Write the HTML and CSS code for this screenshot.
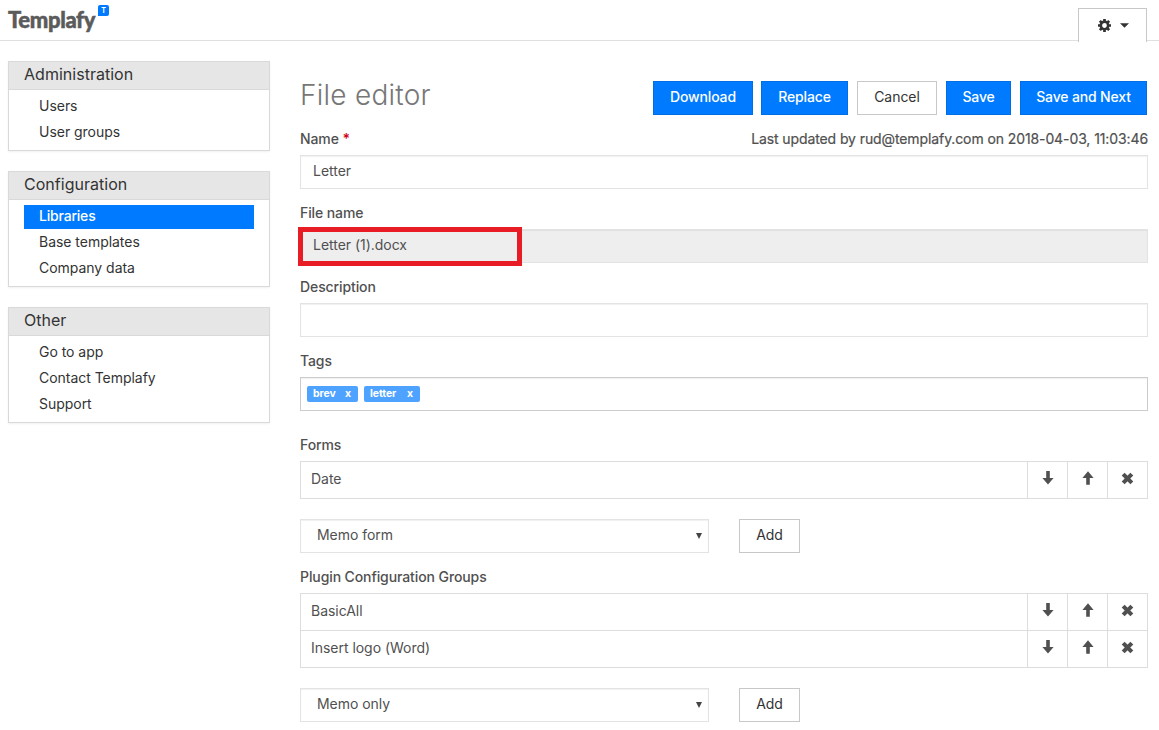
FILE: index.html
```html
<!DOCTYPE html>
<html lang="en">
<head>
<meta charset="utf-8">
<title>Templafy – File editor</title>
<link rel="stylesheet" href="styles.css">
</head>
<body>
<svg class="sprite" aria-hidden="true">
  <symbol id="down" viewBox="0 0 12 14"><path d="M4.2 0h3.6v7H11.6L6 13.5 .4 7h3.8z"/></symbol>
  <symbol id="up" viewBox="0 0 12 14"><path d="M4.2 13.8h3.6V7H11.6L6 .3 .4 7h3.8z"/></symbol>
  <symbol id="cross" viewBox="0 0 12 12"><path d="M2 2l8 8M10 2l-8 8" fill="none" stroke="currentColor" stroke-width="3.8"/></symbol>
</svg>
<header class="topbar">
  <div class="logo"><span class="logo-word">Templafy</span><span class="logo-badge">T</span></div>
  <div class="settings">
    <svg class="gear" viewBox="0 0 12 12"><circle cx="6" cy="6" r="3.4" fill="none" stroke="currentColor" stroke-width="2.4"/><path d="M6 0v2M6 10v2M0 6h2M10 6h2M1.7 1.7l1.5 1.5M8.8 8.8l1.5 1.5M1.7 10.3l1.5-1.5M8.8 3.2l1.5-1.5" stroke="currentColor" stroke-width="2.5"/></svg>
    <svg class="caret" viewBox="0 0 8 4"><path d="M0 0h8L4 4z"/></svg>
  </div>
</header>
<div class="layout">
  <nav class="sidebar">
    <section class="panel">
      <h2 class="panel-head">Administration</h2>
      <ul class="menu"><li>Users</li><li>User groups</li></ul>
    </section>
    <section class="panel">
      <h2 class="panel-head">Configuration</h2>
      <ul class="menu"><li class="active">Libraries</li><li>Base templates</li><li>Company data</li></ul>
    </section>
    <section class="panel">
      <h2 class="panel-head">Other</h2>
      <ul class="menu"><li>Go to app</li><li>Contact Templafy</li><li>Support</li></ul>
    </section>
  </nav>
  <main class="main">
    <div class="title-row">
      <h1 class="title">File editor</h1>
      <div class="actions">
        <div class="btn primary download">Download</div>
        <div class="btn primary replace">Replace</div>
        <div class="btn cancel">Cancel</div>
        <div class="btn primary save">Save</div>
        <div class="btn primary next">Save and Next</div>
      </div>
    </div>
    <div class="field">
      <div class="label"><span>Name <b class="req">*</b></span><span class="updated">Last updated by rud@templafy.com on 2018-04-03, 11:03:46</span></div>
      <div class="input">Letter</div>
    </div>
    <div class="field">
      <div class="label">File name</div>
      <div class="input disabled">Letter (1).docx<div class="highlight"></div></div>
    </div>
    <div class="field">
      <div class="label">Description</div>
      <div class="input"></div>
    </div>
    <div class="field tags-field">
      <div class="label">Tags</div>
      <div class="input tags"><span class="tag brev">brev<i>x</i></span><span class="tag letter">letter<i>x</i></span></div>
    </div>
    <div class="field">
      <div class="label">Forms</div>
      <div class="grid">
        <div class="row"><div class="cell">Date</div><div class="ic"><svg><use href="#down"/></svg></div><div class="ic"><svg><use href="#up"/></svg></div><div class="ic"><svg class="x"><use href="#cross"/></svg></div></div>
      </div>
      <div class="add-row"><div class="input select">Memo form<span class="arrow"></span></div><div class="btn add">Add</div></div>
    </div>
    <div class="field">
      <div class="label">Plugin Configuration Groups</div>
      <div class="grid">
        <div class="row"><div class="cell">BasicAll</div><div class="ic"><svg><use href="#down"/></svg></div><div class="ic"><svg><use href="#up"/></svg></div><div class="ic"><svg class="x"><use href="#cross"/></svg></div></div>
        <div class="row"><div class="cell">Insert logo (Word)</div><div class="ic"><svg><use href="#down"/></svg></div><div class="ic"><svg><use href="#up"/></svg></div><div class="ic"><svg class="x"><use href="#cross"/></svg></div></div>
      </div>
      <div class="add-row"><div class="input select">Memo only<span class="arrow"></span></div><div class="btn add">Add</div></div>
    </div>
  </main>
</div>
</body>
</html>
```
FILE: styles.css
```css
* { box-sizing: border-box; }
body { margin: 0; height: 730px; overflow: hidden; background: #fff; color: #505050; font: 14px/20px Inter, "Liberation Sans", sans-serif; letter-spacing: -0.03px; white-space: nowrap; }
svg { display: block; fill: currentColor; }
.sprite { display: none; }
h1, h2, ul { margin: 0; padding: 0; font-weight: 400; list-style: none; }

.topbar { display: flex; justify-content: space-between; height: 41px; padding: 0 12px 0 8px; border-bottom: 1px solid #e0e0e0; }
.logo { display: flex; align-items: flex-start; padding-top: 5px; }
.logo-word { width: 89px; margin-top: 3px; font: 900 22px/24px Lato, sans-serif; letter-spacing: -0.35px; color: #5b5b5b; -webkit-text-stroke: 0.5px #5b5b5b; }
.logo-badge { width: 11px; height: 11px; margin-left: 1px; border-radius: 2px 2px 2px 0; background: #007bff; color: #fff; font-weight: 700; font-size: 7px; line-height: 11px; text-align: center; }
.settings { display: flex; align-items: center; width: 69px; height: 34px; margin-top: 8px; padding: 0 0 1px 19px; border: 1px solid #c8c8c8; border-bottom: 0; background: #fff; color: #333; }
.gear { width: 13px; height: 13px; }
.caret { width: 9px; height: 5px; margin-left: 9px; }

.layout { display: flex; gap: 30px; padding: 20px 11px 0 8px; }
.sidebar { display: flex; flex-direction: column; gap: 20px; width: 262px; }
.panel { border: 1px solid #d9d9d9; box-shadow: 0 1px 2px rgba(0,0,0,.06); padding-bottom: 3px; }
.panel-head { height: 28px; padding-left: 15px; border-bottom: 1px solid #d9d9d9; background: #e6e6e6; color: #333; font-size: 16px; line-height: 25px; letter-spacing: 0.02px; }
.menu { padding: 5px 15px 0; color: #333; }
.menu li { height: 24px; margin-bottom: 2px; padding-left: 15px; line-height: 21px; }
.menu .active { background: #007bff; color: #fff; font-weight: 500; letter-spacing: -0.2px; }

.main { width: 848px; padding-top: 20px; }
.title-row { display: flex; justify-content: space-between; height: 34px; margin-bottom: 14px; }
.title { color: #777; font-size: 28px; font-weight: 300; line-height: 29px; letter-spacing: 0.25px; }
.actions { display: flex; gap: 9px; padding-right: 1px; }
.btn { height: 34px; border: 1px solid #c8c8c8; color: #333; line-height: 30px; text-align: center; }
.primary { border-color: #006fe6; background: #007bff; color: #fff; font-weight: 500; letter-spacing: -0.15px; }
.download { width: 100px; margin-right: -1px; }
.replace { width: 87px; }
.cancel { width: 80px; }
.save { width: 65px; }
.next { width: 127px; }

.field { margin-bottom: 14px; }
.tags-field { margin-bottom: 24px; }
.label { display: flex; justify-content: space-between; height: 20px; margin-bottom: 6px; font-weight: 500; letter-spacing: -0.1px; }
.req { color: #d0021b; font-weight: 600; }
.updated { font-weight: 400; -webkit-text-stroke: 0.2px; }
.input { position: relative; height: 34px; padding-left: 12px; border: 1px solid #e3e3e3; box-shadow: inset 0 1px 1px rgba(0,0,0,.06); line-height: 30px; }
.disabled { background: #eee; }
.highlight { position: absolute; left: -3px; top: -3px; width: 224px; height: 39px; border: 5px solid #e81c24; }
.tags { display: flex; align-items: center; gap: 6px; padding-left: 6px; border-color: #ccc; }
.tag { display: flex; justify-content: space-between; height: 16px; padding: 0 7px 0 6px; border-radius: 2px; background: #4da3ff; color: #fff; font-size: 10.5px; font-weight: 700; line-height: 15px; letter-spacing: -0.1px; }
.tag i { font-style: normal; }
.brev { width: 51px; }
.letter { width: 56px; }

.grid { border: 1px solid #ddd; }
.row { display: flex; height: 36px; line-height: 34px; }
.row + .row { height: 37px; border-top: 1px solid #ddd; }
.cell { flex: 1; padding-left: 10px; }
.ic { display: flex; justify-content: center; width: 40px; padding-top: 9px; border-left: 1px solid #ddd; }
.ic svg { width: 12px; height: 14px; }
.ic .x { width: 13px; height: 13px; margin-top: 1px; }
.add-row { display: flex; gap: 30px; margin-top: 20px; }
.select { width: 409px; padding-left: 16px; }
.arrow { position: absolute; right: 6px; top: 13px; border: 3px solid transparent; border-top: 6px solid #444; border-bottom: 0; }
.add { width: 61px; }
```
